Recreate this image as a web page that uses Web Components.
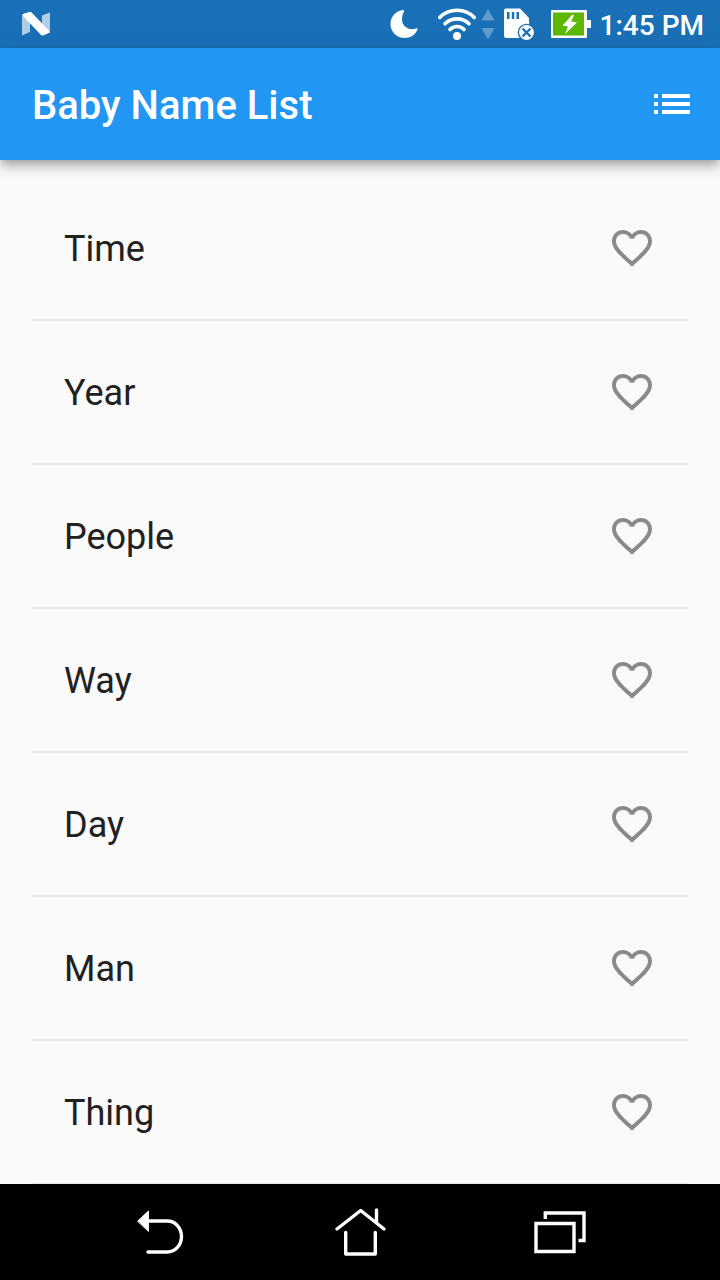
<!DOCTYPE html>
<html lang="en">
<head>
<meta charset="utf-8">
<meta name="viewport" content="width=device-width, initial-scale=1">
<title>Baby Name List</title>
<style>
html, body { margin: 0; height: 100%; }
body { font-family: Roboto, "Noto Sans", sans-serif; background: #fafafa; }
</style>
</head>
<body>
<name-app></name-app>

<template id="name-app">
<style>
:host { display: flex; flex-direction: column; height: 100vh; overflow: hidden; }
main { flex: 1; min-height: 0; overflow: hidden; padding: 32px 32px 0; }
ul { list-style: none; margin: 0; padding: 0; }
</style>
<status-bar>1:45 PM</status-bar>
<app-bar>Baby Name List</app-bar>
<main><ul>
<li><name-row name="Time"></name-row></li>
<li><name-row name="Year"></name-row></li>
<li><name-row name="People"></name-row></li>
<li><name-row name="Way"></name-row></li>
<li><name-row name="Day"></name-row></li>
<li><name-row name="Man"></name-row></li>
<li><name-row name="Thing"></name-row></li>
</ul></main>
<nav-bar></nav-bar>
</template>

<template id="status-bar">
<style>
:host { display: flex; align-items: center; height: 48px; flex: none; box-sizing: border-box; padding: 0 16px 0 20px; background: #1a70b7; color: #fff; font-size: 28px; font-weight: 500; line-height: 48px; white-space: nowrap; }
svg { display: block; flex: none; fill: #fff; }
.gap { flex: 1; }
.clock { padding-top: 4px; padding-left: 2px; }
</style>
<svg width="32" height="48" viewBox="20 0 32 48" aria-hidden="true"><path opacity=".65" d="M22 15l8 7v10l-8 3.500zM50 12.500v19l-8-7v-9z"/><path d="M22 15l2-1.500 5.500-1.500h1.500L50 31.500v1l-7 3h-1.500z"/></svg>
<span class="gap"></span>
<svg width="44" height="48" viewBox="388 0 44 48" aria-hidden="true"><path d="M402.500 10C395 11.500 390.500 17 390.500 24a14 14 0 0 0 14 14c6 0 11-3.500 13-8.500.3-1-.6-1.500-1.500-1-7 2.500-14-2-14-9 0-3 .7-5.500 2-8 .5-1-.5-1.800-1.500-1.500z"/></svg>
<svg width="48" height="48" viewBox="432 0 48 48" aria-hidden="true"><g fill="none" stroke="#fff" stroke-width="3.600" stroke-linecap="round"><path d="M439.800 17.500c9-9.600 25.400-9.600 34.400 0M445 23.800c6.300-6.600 17.700-6.600 24 0M450 29.500c3.700-4 10.300-4 14 0"/></g><circle cx="457" cy="36" r="4"/></svg>
<svg width="16" height="48" viewBox="480 0 16 48" aria-hidden="true"><path opacity=".3" d="M488 9l6.500 11.500h-13zM488 39.500L481.500 28h13z"/></svg>
<svg width="48" height="48" viewBox="496 0 48 48" aria-hidden="true"><path d="M506 8.500h14L529 18v20h-23q-2 0-2-2V10.500q0-2 2-2z"/><path fill="#1a70b7" d="M507 12h2.500v7H507zm4.800 0h2.500v7h-2.500zm4.700 0h2.500v7h-2.500z"/><circle cx="526.500" cy="32.500" r="8.800" fill="#1a70b7"/><circle cx="526.500" cy="32.500" r="7.400"/><path stroke="#1a70b7" stroke-width="2.400" d="M522.500 28.500l8 8M530.500 28.500l-8 8"/></svg>
<svg width="54" height="48" viewBox="544 0 54 48" aria-hidden="true"><path d="M552 10h34q1 0 1 1v9h4v8h-4v9q0 1-1 1h-34q-1 0-1-1V11q0-1 1-1z"/><path fill="#5cb800" d="M553 12.500h31v23h-31z"/><path d="M572.500 14.500l-10 11 5.500 1-3 7.500 12-11.500-6-1 3-6z"/></svg>
<span class="clock"><slot></slot></span>
</template>

<template id="app-bar">
<style>
:host { display: flex; align-items: center; justify-content: space-between; flex: none; height: 112px; box-sizing: border-box; padding: 0 24px 0 32px; background: #2196f3; color: #fff; position: relative; z-index: 1; box-shadow: 0 4px 8px -2px #0003, 0 8px 10px #00000024, 0 2px 20px #0000001f; }
h1 { margin: 0; padding-top: 4px; font-size: 40px; line-height: 48px; font-weight: 500; }
button { border: 0; padding: 0; background: none; width: 48px; height: 48px; cursor: pointer; }
svg { display: block; fill: #fff; }
</style>
<h1><slot></slot></h1>
<button aria-label="Saved names"><svg width="48" height="48" viewBox="0 0 24 24"><path d="M3 13h2v-2H3v2zm0 4h2v-2H3v2zm0-8h2V7H3v2zm4 4h14v-2H7v2zm0 4h14v-2H7v2zM7 7v2h14V7H7z"/></svg></button>
</template>

<template id="name-row">
<style>
:host { display: block; }
.tile { display: flex; align-items: center; justify-content: space-between; height: 112px; padding: 0 32px; color: #212121; font-size: 36px; line-height: 48px; }
.name { padding-top: 2px; }
.divider { height: 2px; padding: 15px 0; background: #e9e9e9 content-box; }
button { border: 0; padding: 0; background: none; width: 48px; height: 48px; cursor: pointer; }
svg { display: block; fill: #8a8a8a; }
</style>
<div class="tile"><span class="name"></span><button><svg width="48" height="48" viewBox="0 0 24 24"><path d="M16.500 3c-1.740 0-3.410.81-4.500 2.090C10.910 3.810 9.240 3 7.500 3 4.420 3 2 5.420 2 8.500c0 3.780 3.400 6.860 8.550 11.540L12 21.350l1.450-1.320C18.600 15.360 22 12.280 22 8.500 22 5.420 19.580 3 16.500 3zm-4.400 15.550l-.1.100-.1-.100C7.140 14.240 4 11.390 4 8.500 4 6.500 5.500 5 7.500 5c1.540 0 3.040.99 3.570 2.360h1.870C13.460 5.990 14.960 5 16.500 5c2 0 3.500 1.500 3.500 3.500 0 2.890-3.140 5.740-7.900 10.050z"/></svg></button></div>
<div class="divider"></div>
</template>

<template id="nav-bar">
<style>
:host { display: block; flex: none; background: #000; position: relative; z-index: 1; }
nav { display: flex; justify-content: center; height: 96px; }
button { border: 0; padding: 0; background: none; width: 200px; height: 96px; cursor: pointer; display: flex; justify-content: center; }
svg { display: block; fill: none; stroke: #fff; stroke-width: 3.400; stroke-linecap: round; stroke-linejoin: round; }
</style>
<nav aria-label="System">
<button aria-label="Back"><svg width="80" height="96" viewBox="120 1184 80 96"><path d="M147 1221h20.500a14 15.500 0 0 1 0 31H148"/><path fill="#fff" stroke-width="1" d="M137.800 1221l10.700-10v20z"/></svg></button>
<button aria-label="Home"><svg width="80" height="96" viewBox="320 1184 80 96"><path d="M337 1229l23.700-18.500L384 1229M376.500 1210v12M345.700 1232.500v21.500h29.600v-21.500"/></svg></button>
<button aria-label="Recent apps"><svg width="80" height="96" viewBox="520 1184 80 96"><path stroke-linecap="butt" stroke-linejoin="miter" d="M536 1223.500h38v28h-38zM545.300 1219v-6h38.700v27.500h-5.500"/></svg></button>
</nav>
</template>

<script>
class TemplateElement extends HTMLElement {
  constructor() {
    super();
    const template = document.getElementById(this.localName);
    this.attachShadow({ mode: "open" }).append(template.content.cloneNode(true));
  }
}
class StatusBar extends TemplateElement {}
class AppBar extends TemplateElement {}
class NavBar extends TemplateElement {}
class NameApp extends TemplateElement {}
class NameRow extends TemplateElement {
  connectedCallback() {
    const name = this.getAttribute("name");
    const button = this.shadowRoot.querySelector("button");
    this.shadowRoot.querySelector(".name").textContent = name;
    button.setAttribute("aria-label", "Save " + name);
    button.setAttribute("aria-pressed", "false");
  }
}
customElements.define("status-bar", StatusBar);
customElements.define("app-bar", AppBar);
customElements.define("name-row", NameRow);
customElements.define("nav-bar", NavBar);
customElements.define("name-app", NameApp);
</script>
</body>
</html>
